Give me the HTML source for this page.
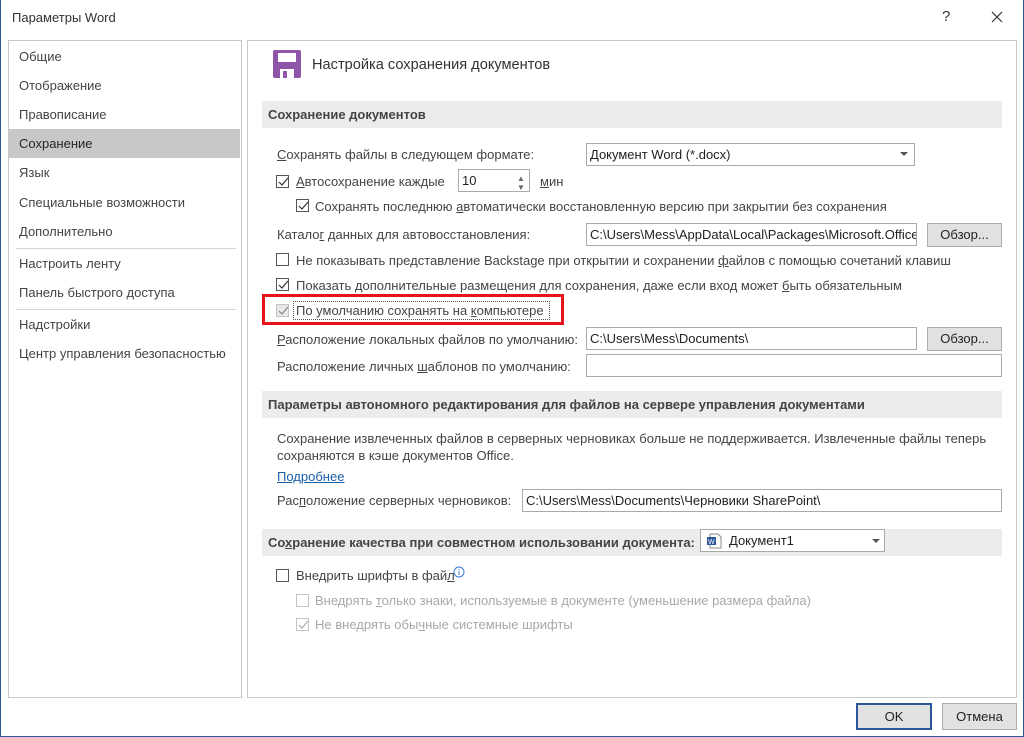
<!DOCTYPE html>
<html><head><meta charset="utf-8"><style>
*{margin:0;padding:0;box-sizing:border-box}
body{width:1024px;height:737px;background:#fff;font-family:"Liberation Sans","Noto Sans CJK SC",sans-serif;font-size:13px;color:#444;position:relative;overflow:hidden}
.a{position:absolute;white-space:nowrap;line-height:16px}
.frame{position:absolute;left:0;top:0;width:1024px;height:737px;border:1px solid #2b579a;border-top:none}
.panel{position:absolute;background:#fff;border:1px solid #c8c8c8}
.nav{position:absolute;left:9px;width:231px;height:29px;line-height:29px;padding-left:10px;color:#444;font-size:13px}
.sel{background:#c8c8c8;color:#262626}
.sep{position:absolute;left:16px;width:220px;height:1px;background:#d4d4d4}
.hdr{position:absolute;left:262px;width:740px;height:27px;background:#ececec;font-weight:bold;line-height:27px;padding-left:6px;color:#444}
.cb{position:absolute;width:13px;height:13px;border:1px solid #555;background:#fff}
.cb.dis{border-color:#c4c4c4}
.cb svg{position:absolute;left:0;top:0}
.inp{position:absolute;height:23px;border:1px solid #aaa;background:#fff;line-height:21px;padding-left:3px;color:#222;overflow:hidden}
.btn{position:absolute;height:24px;border:1px solid #adadad;background:#e1e1e1;text-align:center;line-height:22px;color:#222}
u{text-decoration:underline}
.dis{color:#a8a8a8}
.arr{position:absolute;width:0;height:0;border-left:4px solid transparent;border-right:4px solid transparent;border-top:4px solid #555}
</style></head><body>
<div class="frame"></div>
<div class="a" style="left:12px;top:10px;color:#333">Параметры Word</div>
<div class="a" style="left:942px;top:9px;font-size:15px;color:#333">?</div>
<svg class="a" style="left:991px;top:11px" width="12" height="12"><path d="M1 1L11 11M11 1L1 11" stroke="#333" stroke-width="1.2"/></svg>

<div class="panel" style="left:8px;top:40px;width:234px;height:658px"></div>
<div class="nav" style="top:42px">Общие</div>
<div class="nav" style="top:71px">Отображение</div>
<div class="nav" style="top:100px">Правописание</div>
<div class="nav sel" style="top:129px">Сохранение</div>
<div class="nav" style="top:158px">Язык</div>
<div class="nav" style="top:188px">Специальные возможности</div>
<div class="nav" style="top:217px">Дополнительно</div>
<div class="sep" style="top:248px"></div>
<div class="nav" style="top:249px">Настроить ленту</div>
<div class="nav" style="top:278px">Панель быстрого доступа</div>
<div class="sep" style="top:309px"></div>
<div class="nav" style="top:310px">Надстройки</div>
<div class="nav" style="top:339px">Центр управления безопасностью</div>

<div class="panel" style="left:247px;top:40px;width:770px;height:658px"></div>
<svg class="a" style="left:273px;top:50px" width="28" height="28"><rect x="0" y="0" width="28" height="28" rx="2" fill="#8e55a8"/><rect x="5" y="3" width="18" height="9" fill="#fff"/><rect x="7" y="19" width="14" height="9" fill="#fff"/><rect x="10" y="21" width="4" height="7" fill="#8e55a8"/></svg>
<div class="a" style="left:312px;top:57px;font-size:14.6px;color:#333">Настройка сохранения документов</div>

<div class="hdr" style="top:101px">Сохранение документов</div>
<div class="a" style="left:277px;top:147px"><u>С</u>охранять файлы в следующем формате:</div>
<div class="inp" style="left:586px;top:143px;width:329px">Документ Word (*.docx)</div><div class="arr" style="left:900px;top:152px"></div>
<div class="cb" style="left:276px;top:175px"><svg width="13" height="13"><path d="M2 6l3 3 6-7" stroke="#333" fill="none" stroke-width="1.2"/></svg></div>
<div class="a" style="left:296px;top:174px"><u>А</u>втосохранение каждые</div>
<div class="inp" style="left:458px;top:169px;width:72px">10</div>
<div class="a" style="left:517px;top:171px;font-size:8px;color:#666">▲</div><div class="a" style="left:517px;top:180px;font-size:8px;color:#666">▼</div>
<div class="a" style="left:540px;top:174px"><u>м</u>ин</div>
<div class="cb" style="left:296px;top:199px"><svg width="13" height="13"><path d="M2 6l3 3 6-7" stroke="#333" fill="none" stroke-width="1.2"/></svg></div>
<div class="a" style="left:315px;top:199px">Сохранять последнюю <u>а</u>втоматически восстановленную версию при закрытии без сохранения</div>
<div class="a" style="left:277px;top:227px">Катало<u>г</u> данных для автовосстановления:</div>
<div class="inp" style="left:586px;top:223px;width:331px">C:\Users\Mess\AppData\Local\Packages\Microsoft.Office.</div>
<div class="btn" style="left:927px;top:223px;width:75px">Обзор...</div>
<div class="cb" style="left:276px;top:253px"></div>
<div class="a" style="left:296px;top:253px">Не показывать представление Backstage при открытии и сохранении <u>ф</u>айлов с помощью сочетаний клавиш</div>
<div class="cb" style="left:276px;top:278px"><svg width="13" height="13"><path d="M2 6l3 3 6-7" stroke="#333" fill="none" stroke-width="1.2"/></svg></div>
<div class="a" style="left:296px;top:278px">Показать дополнительные размещения для сохранения, даже если вход может <u>б</u>ыть обязательным</div>
<div class="a" style="left:262px;top:294px;width:302px;height:31px;border:3px solid #e8141b"></div>
<div class="cb dis" style="left:276px;top:304px;background:#e8e8e8"><svg width="13" height="13"><path d="M2 6l3 3 6-7" stroke="#888" fill="none" stroke-width="1.2"/></svg></div>
<div class="a" style="left:293px;top:301px;height:19px;width:257px;border:1px dotted #555"></div>
<div class="a" style="left:296px;top:303px">По умолчанию сохранять на <u>к</u>омпьютере</div>
<div class="a" style="left:277px;top:332px"><u>Р</u>асположение локальных файлов по умолчанию:</div>
<div class="inp" style="left:586px;top:327px;width:331px">C:\Users\Mess\Documents\</div>
<div class="btn" style="left:927px;top:327px;width:75px">Обзор...</div>
<div class="a" style="left:277px;top:359px">Расположение личных <u>ш</u>аблонов по умолчанию:</div>
<div class="inp" style="left:586px;top:354px;width:416px"></div>

<div class="hdr" style="top:391px">Параметры автономного редактирования для файлов на сервере управления документами</div>
<div class="a" style="left:277px;top:431px">Сохранение извлеченных файлов в серверных черновиках больше не поддерживается. Извлеченные файлы теперь</div>
<div class="a" style="left:277px;top:448px">сохраняются в кэше документов Office.</div>
<div class="a" style="left:277px;top:469px;color:#1a5ea8"><u>Подробнее</u></div>
<div class="a" style="left:277px;top:493px">Рас<u>п</u>оложение серверных черновиков:</div>
<div class="inp" style="left:522px;top:489px;width:480px">C:\Users\Mess\Documents\Черновики SharePoint\</div>

<div class="hdr" style="top:529px">Со<u>х</u>ранение качества при совместном использовании документа:</div>
<div class="inp" style="left:700px;top:529px;width:185px;padding-left:28px">Документ1</div>
<svg class="a" style="left:706px;top:533px" width="16" height="16"><path d="M4 1h8l3 3v11H4z" fill="#fff" stroke="#888"/><rect x="1" y="4" width="9" height="8" fill="#2b579a"/><text x="2" y="11" font-size="7" fill="#fff" font-family="Liberation Sans">W</text></svg>
<div class="arr" style="left:872px;top:539px"></div>
<div class="cb" style="left:276px;top:569px"></div>
<div class="a" style="left:296px;top:568px">Внедрить шрифты в фай<u>л</u></div>
<svg class="a" style="left:453px;top:566px" width="12" height="12"><circle cx="6" cy="6" r="5" fill="none" stroke="#3a7bd5"/><path d="M6 5v4M6 3v1" stroke="#3a7bd5"/></svg>
<div class="cb dis" style="left:296px;top:594px"></div>
<div class="a dis" style="left:315px;top:593px">Внедрять <u>т</u>олько знаки, используемые в документе (уменьшение размера файла)</div>
<div class="cb dis" style="left:296px;top:618px"><svg width="13" height="13"><path d="M2 6l3 3 6-7" stroke="#aaa" fill="none" stroke-width="1.2"/></svg></div>
<div class="a dis" style="left:315px;top:617px">Не внедрять обы<u>ч</u>ные системные шрифты</div>

<div class="btn" style="left:856px;top:703px;width:76px;height:27px;line-height:23px;border:2px solid #2b579a">OK</div>
<div class="btn" style="left:942px;top:703px;width:75px;height:27px;line-height:25px">Отмена</div>
</body></html>
